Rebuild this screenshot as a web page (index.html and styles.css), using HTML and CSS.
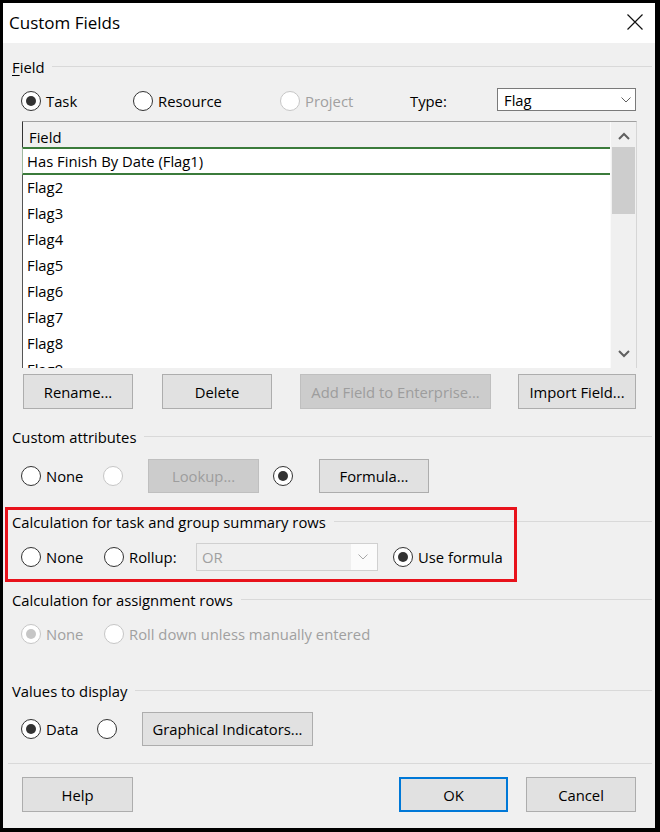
FILE: index.html
```html
<!DOCTYPE html>
<html>
<head>
<meta charset="utf-8">
<title>Custom Fields</title>
<link rel="stylesheet" href="styles.css">
</head>
<body>
<div class="dialog">
  <div class="titlebar">
    <span class="title">Custom Fields</span>
    <svg class="close" width="16" height="16" viewBox="0 0 16 16"><path d="M0.5 0.5L15.5 15.5M15.5 0.5L0.5 15.5" stroke="#111" stroke-width="1.2" fill="none"/></svg>
  </div>
  <div class="content">
    <div class="group-label g-field"><span><u>F</u>ield</span></div>
    <div class="row row-type">
      <label class="opt"><span class="radio checked"></span>Task</label>
      <label class="opt"><span class="radio"></span>Resource</label>
      <label class="opt disabled"><span class="radio"></span>Project</label>
      <span class="type-label">Type:</span>
      <div class="select">
        <span>Flag</span>
        <svg class="chev" width="10" height="6" viewBox="0 0 10 6"><path d="M0.5 0.5L5 5L9.5 0.5" stroke="#606060" stroke-width="1" fill="none"/></svg>
      </div>
    </div>
    <div class="list">
      <div class="list-body">
        <div class="list-head">Field</div>
        <div class="list-row selected">Has Finish By Date (Flag1)</div>
        <div class="list-row">Flag2</div>
        <div class="list-row">Flag3</div>
        <div class="list-row">Flag4</div>
        <div class="list-row">Flag5</div>
        <div class="list-row">Flag6</div>
        <div class="list-row">Flag7</div>
        <div class="list-row">Flag8</div>
        <div class="list-row">Flag9</div>
      </div>
      <div class="scrollbar">
        <div class="sb-btn"><svg width="12" height="8" viewBox="0 0 12 8"><path d="M1 7L6 2L11 7" stroke="#606060" stroke-width="2" fill="none"/></svg></div>
        <div class="thumb"></div>
        <div class="sb-btn sb-down"><svg width="12" height="8" viewBox="0 0 12 8"><path d="M1 1L6 6L11 1" stroke="#606060" stroke-width="2" fill="none"/></svg></div>
      </div>
    </div>
    <div class="row btn-row">
      <button class="btn w110">Rename...</button>
      <button class="btn w110">Delete</button>
      <button class="btn w191 dis">Add Field to Enterprise...</button>
      <button class="btn w118">Import Field...</button>
    </div>

    <div class="group-label g-custom"><span>Custom attributes</span></div>
    <div class="row row-attr">
      <label class="opt"><span class="radio"></span>None</label>
      <label class="opt disabled"><span class="radio"></span></label>
      <button class="btn w111 h34 dis">Lookup...</button>
      <label class="opt"><span class="radio checked"></span></label>
      <button class="btn w110 h34">Formula...</button>
    </div>

    <div class="summary">
      <div class="group-label"><span>Calculation for task and group summary rows</span></div>
      <div class="row row-summary">
        <label class="opt"><span class="radio"></span>None</label>
        <label class="opt"><span class="radio"></span>Rollup:</label>
        <div class="combo">
          <span class="combo-val">OR</span>
          <span class="combo-btn"><svg width="10" height="6" viewBox="0 0 10 6"><path d="M0.5 0.5L5 5L9.5 0.5" stroke="#a8a8a8" stroke-width="1" fill="none"/></svg></span>
        </div>
        <label class="opt"><span class="radio checked"></span>Use formula</label>
      </div>
      <div class="highlight"></div>
    </div>

    <div class="group-label g-assign"><span>Calculation for assignment rows</span></div>
    <div class="row row-assign">
      <label class="opt disabled"><span class="radio checked"></span>None</label>
      <label class="opt disabled"><span class="radio"></span>Roll down unless manually entered</label>
    </div>

    <div class="group-label g-values"><span>Values to display</span></div>
    <div class="row row-values">
      <label class="opt"><span class="radio checked"></span>Data</label>
      <label class="opt"><span class="radio"></span></label>
      <button class="btn w171 h34">Graphical Indicators...</button>
    </div>

    <div class="separator"></div>

    <div class="row bottom-row">
      <button class="btn w111">Help</button>
      <button class="btn w109 default">OK</button>
      <button class="btn w110">Cancel</button>
    </div>
  </div>
</div>
</body>
</html>
```
FILE: styles.css
```css
html, body {
  margin: 0;
  padding: 0;
  background: #000;
}
body {
  width: 660px;
  height: 832px;
  overflow: hidden;
  font-family: "Open Sans", "Noto Sans", sans-serif;
  font-size: 14.8px;
  color: #000;
}
.dialog {
  margin: 3px 0 0 3px;
  width: 652px;
  height: 825px;
  background: #f0f0f0;
  overflow: hidden;
}
.titlebar {
  height: 40px;
  background: #fff;
  display: flex;
  align-items: center;
  justify-content: space-between;
  padding: 0 12px 0 6px;
}
.title {
  font-size: 17px;
  line-height: 20px;
  margin-top: -1px;
}
.close {
  display: block;
  margin-top: -2px;
}
.content {
  padding: 0 3px 0 9px;
}
.group-label {
  display: flex;
  align-items: center;
  height: 20px;
  line-height: 20px;
}
.group-label::after {
  content: "";
  flex: 1;
  height: 1px;
  background: #d9d9d9;
  margin-left: 8px;
  margin-top: -1px;
}
.group-label u {
  text-decoration-thickness: 1px;
  text-underline-offset: 2px;
}
.g-field { margin-top: 14px; }
.g-custom { margin-top: 18px; }
.g-assign { margin-top: 19px; }
.g-values { margin-top: 35px; }

.row {
  display: grid;
  align-items: center;
}
.opt {
  display: flex;
  align-items: center;
  gap: 5px;
  white-space: nowrap;
}
.opt.disabled {
  color: #a0a0a0;
}
.radio {
  width: 20px;
  height: 20px;
  box-sizing: border-box;
  border: 1px solid #333;
  border-radius: 50%;
  background: #fff;
  display: flex;
  align-items: center;
  justify-content: center;
  flex: none;
}
.radio.checked::after {
  content: "";
  width: 10px;
  height: 10px;
  border-radius: 50%;
  background: #333;
}
.disabled .radio {
  border-color: #c6c6c6;
}
.disabled .radio.checked::after {
  background: #c6c6c6;
}

.row-type {
  margin-top: 11px;
  height: 26px;
  padding-left: 9px;
  grid-template-columns: 112px 147px 130px 87px 139px;
}
.type-label {
  white-space: nowrap;
}
.select {
  align-self: start;
  height: 23px;
  box-sizing: border-box;
  border: 1px solid #7a7a7a;
  background: #fff;
  display: flex;
  align-items: center;
  justify-content: space-between;
  padding: 0 4px 0 6px;
}
.select span {
  line-height: 20px;
}
.chev {
  display: block;
}

.list {
  margin: 7px 0 0 10px;
  width: 615px;
  height: 247px;
  box-sizing: border-box;
  border-top: 1px solid #a0a0a0;
  border-left: 1px solid #555;
  border-right: 1px solid #d6d6d6;
  display: flex;
  background: #fff;
}
.list-body {
  flex: 1;
  overflow: hidden;
  margin-left: -1px;
}
.list-head {
  height: 25px;
  box-sizing: border-box;
  padding: 5px 0 0 6px;
  line-height: 20px;
  background: #f0f0f0;
  border-left: 1px solid #333;
}
.list-row {
  height: 26px;
  line-height: 25px;
  padding-left: 4px;
  border-left: 1px solid #555;
  white-space: nowrap;
}
.list-row.selected {
  height: 28px;
  line-height: 24px;
  box-sizing: border-box;
  border-top: 2px solid #3b7b3b;
  border-bottom: 2px solid #3b7b3b;
  border-left: 1px solid #9fb89f;
}
.scrollbar {
  width: 25px;
  background: #f0f0f0;
  border-left: 1px solid #fafafa;
  display: flex;
  flex-direction: column;
}
.sb-btn {
  height: 25px;
  display: flex;
  align-items: center;
  justify-content: center;
  padding-top: 2px;
  box-sizing: border-box;
}
.sb-btn svg { display: block; }
.thumb {
  height: 67px;
  margin: 0 1px 0 1px;
  background: #cdcdcd;
}
.sb-down {
  margin-top: auto;
  height: 28px;
  padding-top: 0;
}

.btn {
  font-family: inherit;
  font-size: 14.8px;
  color: #000;
  height: 35px;
  box-sizing: border-box;
  background: #e1e1e1;
  border: 1px solid #adadad;
  padding: 0;
  margin: 0;
  white-space: nowrap;
}
.btn.dis {
  background: #cccccc;
  border-color: #bfbfbf;
  color: #9d9d9d;
}
.btn.default {
  border: 2px solid #0078d7;
}
.h34 { height: 34px; }
.w109 { width: 109px; }
.w110 { width: 110px; }
.w111 { width: 111px; }
.w118 { width: 118px; }
.w171 { width: 171px; }
.w191 { width: 191px; }

.btn-row {
  margin-top: 6px;
  padding-left: 11px;
  grid-template-columns: 139px 138px 218px 118px;
}
.row-attr {
  margin-top: 12px;
  height: 34px;
  padding-left: 9px;
  grid-template-columns: 82px 45px 125px 46px 110px;
}

.summary {
  position: relative;
  margin-top: 19px;
}
.row-summary {
  margin-top: 11px;
  height: 28px;
  padding-left: 9px;
  grid-template-columns: 83px 92px 197px auto;
}
.combo {
  width: 182px;
  height: 28px;
  box-sizing: border-box;
  border: 1px solid #d0d0d0;
  background: #efefef;
  display: flex;
  align-items: center;
}
.combo-val {
  flex: 1;
  color: #a0a0a0;
  padding-left: 5px;
}
.combo-btn {
  width: 26px;
  height: 100%;
  background: #fbfbfb;
  display: flex;
  align-items: center;
  justify-content: center;
}
.combo-btn svg { display: block; margin-left: -2px; }
.highlight {
  position: absolute;
  left: -7px;
  top: -5px;
  width: 512px;
  height: 75px;
  box-sizing: border-box;
  border: 3px solid #e8121b;
  pointer-events: none;
}

.row-assign {
  margin-top: 12px;
  height: 24px;
  padding-left: 9px;
  grid-template-columns: 83px auto;
}
.row-values {
  margin-top: 11px;
  height: 34px;
  padding-left: 9px;
  grid-template-columns: 76px 45px 171px;
}
.separator {
  margin: 17px 0 0 -4px;
  height: 1px;
  background: #d9d9d9;
}
.bottom-row {
  margin-top: 13px;
  padding-left: 10px;
  grid-template-columns: 377px 127px 110px;
}
```
